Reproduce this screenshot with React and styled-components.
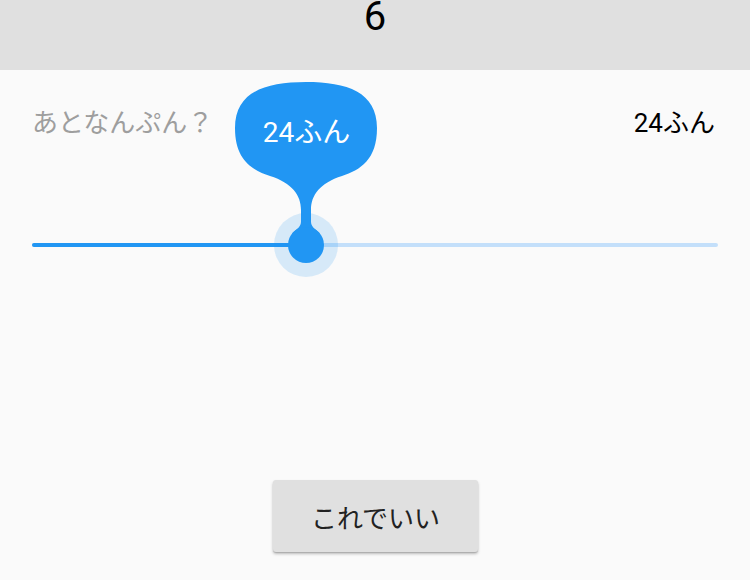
import styled, { createGlobalStyle } from "styled-components";

const GlobalStyle = createGlobalStyle`
  html, body {
    margin: 0;
    padding: 0;
    background: #fafafa;
    font-family: Roboto, "Noto Sans CJK JP", sans-serif;
  }
`;

const MIN = 0;
const MAX = 60;

const App = () => {
  const minutes = 24;
  const ratio = (minutes - MIN) / (MAX - MIN);

  return (
    <Page>
      <GlobalStyle />
      <Header>
        <Count>6</Count>
      </Header>
      <Body>
        <LabelRow>
          <Question>あとなんぷん？</Question>
          <Value>{minutes}ふん</Value>
        </LabelRow>
        <Slider>
          <TrackBase />
          <TrackActive style={{ width: `${ratio * 100}%` }} />
          <ThumbSpot style={{ left: `${ratio * 100}%` }}>
            <Halo />
            <Bubble>
              <svg width="142" height="155" viewBox="0 0 142 155">
                <path
                  fill="#2196f3"
                  d="M71 0 C112 0 142 10 142 46 C142 78 125 88 107 94 C85 101 76 113 76 128 L76 140 C76 146 83 148 85 152 L57 152 C59 148 66 146 66 140 L66 128 C66 113 57 101 35 94 C17 88 0 78 0 46 C0 10 30 0 71 0 Z"
                />
              </svg>
              <BubbleText>{minutes}ふん</BubbleText>
            </Bubble>
            <Thumb />
          </ThumbSpot>
        </Slider>
        <Footer>
          <OkButton>これでいい</OkButton>
        </Footer>
      </Body>
    </Page>
  );
};

export default App;

const Page = styled.div`
  width: 750px;
  height: 580px;
  overflow: hidden;
  background: #fafafa;
`;

const Header = styled.div`
  height: 70px;
  background: #e0e0e0;
  display: flex;
  justify-content: center;
  align-items: flex-start;
`;

const Count = styled.div`
  font-size: 40px;
  line-height: 40px;
  margin-top: -3px;
  color: #000;
`;

const Body = styled.div`
  padding: 0 32px;
  display: flex;
  flex-direction: column;
`;

const LabelRow = styled.div`
  margin-top: 37px;
  display: flex;
  justify-content: space-between;
  align-items: center;
  font-size: 26px;
  line-height: 32px;
`;

const Question = styled.span`
  color: #9e9e9e;
`;

const Value = styled.span`
  color: #000;
  margin-right: 3px;
`;

const Slider = styled.div`
  position: relative;
  margin-top: 74px;
  height: 64px;
`;

const TrackBase = styled.div`
  position: absolute;
  left: 0;
  right: 0;
  top: 30px;
  height: 4px;
  border-radius: 2px;
  background: #c3dffa;
`;

const TrackActive = styled.div`
  position: absolute;
  left: 0;
  top: 30px;
  height: 4px;
  border-radius: 2px 0 0 2px;
  background: #2196f3;
`;

const ThumbSpot = styled.div`
  position: absolute;
  top: 32px;
  width: 0;
  height: 0;
`;

const Halo = styled.div`
  position: absolute;
  left: -32px;
  top: -32px;
  width: 64px;
  height: 64px;
  border-radius: 50%;
  background: rgba(33, 150, 243, 0.16);
`;

const Thumb = styled.div`
  position: absolute;
  left: -18px;
  top: -18px;
  width: 36px;
  height: 36px;
  border-radius: 50%;
  background: #2196f3;
`;

const Bubble = styled.div`
  position: absolute;
  left: -71px;
  top: -163px;
  width: 142px;
  height: 155px;

  svg {
    position: absolute;
    left: 0;
    top: 0;
  }
`;

const BubbleText = styled.div`
  position: relative;
  height: 96px;
  display: flex;
  align-items: center;
  justify-content: center;
  color: #fff;
  font-size: 28px;
`;

const Footer = styled.div`
  margin-top: 203px;
  display: flex;
  justify-content: center;
`;

const OkButton = styled.button`
  width: 205px;
  height: 72px;
  margin-left: 1px;
  border: 0;
  border-radius: 3px;
  background: #e0e0e0;
  color: #222;
  font-family: Roboto, "Noto Sans CJK JP", sans-serif;
  font-size: 26px;
  box-shadow: 0 2px 3px rgba(0, 0, 0, 0.25), 0 1px 1px rgba(0, 0, 0, 0.12);
  cursor: pointer;
`;
